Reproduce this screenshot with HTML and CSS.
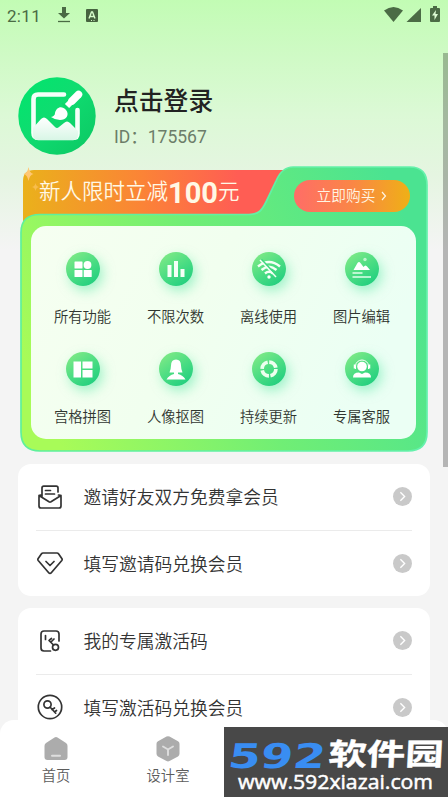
FILE: index.html
```html
<!DOCTYPE html>
<html lang="zh-CN">
<head>
<meta charset="utf-8">
<title>我的</title>
<link rel="stylesheet" href="styles.css">
</head>
<body>
<div class="app">
  <header class="status">
    <span class="time">2:11</span>
    <svg class="st-down" width="14" height="18" viewBox="0 0 14 18"><path d="M5 1h4v6h4L7 12.500 1 7h4z" fill="#4a6b44"/><path d="M1 15.500h12" stroke="#4a6b44" stroke-width="1.300"/></svg>
    <svg class="st-a" width="12" height="13" viewBox="0 0 12 13"><rect width="12" height="13" rx="1" fill="#46633f"/><path d="M3 9.500 5.500 3h1L9 9.500M4 7.500h4" fill="none" stroke="#d5fbc9" stroke-width="1.400"/><path d="M5 11.500h1M7.500 11.500h1" stroke="#d5fbc9"/></svg>
    <span class="spacer"></span>
    <svg width="56" height="18" viewBox="0 0 56 18" fill="#4b6b45"><path d="M0 4.500Q9.500-2.500 19 4.500L9.500 16z"/><path d="M37 2v14H22.500z"/><path d="M49 0h4v2h2q1 0 1 1v12q0 1-1 1h-8q-1 0-1-1V3q0-1 1-1h2z"/><path d="M52 4l-4 5.500h2.500V14l3.500-6h-2.500z" fill="#ddfbd4"/></svg>
  </header>

  <section class="profile">
    <svg class="avatar" width="78" height="78" viewBox="0 0 78 78">
      <defs>
        <linearGradient id="av" x1="0" y1="0" x2="1" y2="1"><stop offset="0" stop-color="#00e66d"/><stop offset=".45" stop-color="#0fdc70"/><stop offset="1" stop-color="#0cc763"/></linearGradient>
        <linearGradient id="hill" x1="0" y1="0" x2="0" y2="1"><stop offset="0" stop-color="#fff"/><stop offset="1" stop-color="#d8f6e6"/></linearGradient>
      </defs>
      <circle cx="39" cy="39" r="38.700" fill="url(#av)"/>
      <path d="M46 17.500H20q-4.500 0-4.500 4.500v34q0 5 5 5H55q4.500 0 4.500-4.500V33" fill="none" stroke="#f5fff9" stroke-width="4.600" stroke-linecap="round"/>
      <path d="M15 51 23 42q3-3 6 0l8 8q2 2 4 0l5-4q3-3 6 0l8 8v4q0 5-5 5H20q-5 0-5-5z" fill="url(#hill)"/>
      <path d="M60.500 17.500 54 24" stroke="#fff" stroke-width="7.500" stroke-linecap="round"/>
      <path d="M54 24 49 29" stroke="#fff" stroke-width="6"/>
      <path d="M33 40q4-1 4-4c1-6 7-8 11-3 4 5 0 10-6 10q-5 0-9-3z" fill="#fff"/>
      <path d="M44 26 53 36" stroke="#0ed56b" stroke-width="1.600"/>
    </svg>
    <div class="who"><h1>点击登录</h1><p>ID：175567</p></div>
  </section>

  <section class="vip">
    <svg class="vip-bg" width="410" height="287" viewBox="0 0 410 287">
      <defs>
        <linearGradient id="orange" x1="0" x2="1"><stop offset="0" stop-color="#eab11b"/><stop offset=".45" stop-color="#fb8436"/><stop offset=".82" stop-color="#ff5d54"/></linearGradient>
        <linearGradient id="green" x1="0" y1=".65" x2="1" y2=".35"><stop offset="0" stop-color="#a8fb58"/><stop offset=".5" stop-color="#70ee75"/><stop offset="1" stop-color="#4be391"/></linearGradient>
        <linearGradient id="edge" x1="0" x2="1"><stop offset="0" stop-color="#5ef09b"/><stop offset="1" stop-color="#65f1ac"/></linearGradient>
        <linearGradient id="panel" x1="0" x2="1" y1="0" y2=".3"><stop offset="0" stop-color="#f6fff1"/><stop offset=".5" stop-color="#f1ffef"/><stop offset="1" stop-color="#ebfff4"/></linearGradient>
      </defs>
      <path d="M3 70V16Q3 5 14 5H265V65z" fill="url(#orange)"/>
      <path d="M1 67.500Q1 49.500 20 49.500H249C259 49.500 262 44 266 36L274 15Q278 2 289 2" fill="none"/>
      <path d="M1 67.500Q1 49.500 20 49.500H229C239 49.500 242 45 246 37L256 16Q262 2 273 2H390Q407 2 407 20V267Q407 286 388 286H20Q1 286 1 267z" fill="url(#green)" stroke="url(#edge)" stroke-width="1.700"/>
      <rect x="11" y="61" width="385" height="213" rx="15" fill="url(#panel)"/>
      <path d="M8.500 2q1 6 5 7-4 1-5 7-1-6-5-7 4-1 5-7z" fill="#ffc775"/>
      <path d="M15.500 18q.6 3.500 3.500 4-2.900.5-3.500 4-.6-3.500-3.500-4 2.900-.5 3.500-4z" fill="#f8bd4d"/>
    </svg>
    <div class="vip-head">
      <div class="promo">新人限时立减<b>100</b>元</div>
      <div class="buy">立即购买<svg width="6" height="10" viewBox="0 0 6 10"><path d="M1 1l3.500 4L1 9" fill="none" stroke="#fff5e3" stroke-width="1.200"/></svg></div>
    </div>
    <div class="features">
      <div class="feature"><div class="disc"><svg viewBox="0 0 34 34" fill="#fff"><rect x="8.500" y="9.500" width="8" height="7" rx=".5"/><circle cx="21.500" cy="13" r="3.900"/><rect x="8.500" y="18" width="8" height="7" rx=".5"/><rect x="17.700" y="18" width="8" height="7" rx=".5"/></svg></div><span>所有功能</span></div>
      <div class="feature"><div class="disc"><svg viewBox="0 0 34 34" fill="#f5fff7"><rect x="8.500" y="13" width="4" height="12"/><rect x="15" y="9" width="4" height="16"/><rect x="21.500" y="17" width="4" height="8"/></svg></div><span>不限次数</span></div>
      <div class="feature"><div class="disc"><svg viewBox="0 0 34 34" fill="none" stroke="#f3fff5" stroke-width="2.400"><path d="M6 14.500Q17 5.500 28 14.500M9.500 18Q17 11.500 24.500 18M13 21.500q4-3.500 8 0"/><circle cx="17" cy="25" r="1.700" fill="#fff" stroke="none"/><path d="M9.500 7.500l15.500 16.500" stroke="#3ed681" stroke-width="1.800"/><path d="M8 8l16 17" stroke-width="1.500"/></svg></div><span>离线使用</span></div>
      <div class="feature"><div class="disc"><svg viewBox="0 0 34 34" fill="#fff"><path d="M8.500 18l4-7q1.500-2 3 0l3 4q2-3 4 0l2.500 3z"/><circle cx="20" cy="7.500" r="1.700" opacity=".6"/><path d="M7.500 21h10M7.500 25h18.500" stroke="#dfffea" stroke-width="1.600"/></svg></div><span>图片编辑</span></div>
      <div class="feature"><div class="disc"><svg viewBox="0 0 34 34" fill="#fff"><rect x="7.500" y="9.500" width="7.500" height="16"/><rect x="16.500" y="9.500" width="10" height="7"/><rect x="16.500" y="18" width="10" height="7.500"/></svg></div><span>宫格拼图</span></div>
      <div class="feature"><div class="disc"><svg viewBox="0 0 34 34" fill="#fff"><path d="M17 7.500q5 0 5 6 0 3 1.500 7H19v1.500q5 1 7.500 5.500h-19q2.500-4.500 7.500-5.500v-1.500h-4.500q1.500-4 1.500-7 0-6 5-6z"/></svg></div><span>人像抠图</span></div>
      <div class="feature"><div class="disc"><svg viewBox="0 0 34 34" fill="none"><circle cx="17" cy="17" r="6.900" stroke="#edffef" stroke-width="3.700" stroke-dasharray="9.300 1.540"/></svg></div><span>持续更新</span></div>
      <div class="feature"><div class="disc"><svg viewBox="0 0 34 34" fill="#fff"><circle cx="17" cy="14.500" r="4.800"/><path d="M10.500 17v-3a6.500 6 0 0 1 13 0v3" fill="none" stroke="#fff" stroke-width="1"/><path d="M9.500 12.500v4M24.500 12.500v4" stroke="#fff" stroke-width="1.500"/><path d="M8 25.500q0-5 6-5l3 1.500 3-1.500q6 0 6 5z"/></svg></div><span>专属客服</span></div>
    </div>
  </section>

  <section class="card">
    <div class="row">
      <svg class="ico" viewBox="0 0 26 26"><path d="M4.500 11H3.500Q2 11 2 12.500V22q0 2 2 2h18q2 0 2-2V12.500Q24 11 22 11h-.5M5 12.500V4q0-1.800 1.800-1.800h12.500Q21 2.200 21 4v4M2 11.500l10 6.300q1 .5 2 0l10-6.300M8.500 6.500h5M8.500 10h9"/></svg>
      <span>邀请好友双方免费拿会员</span><i class="go"><svg viewBox="0 0 18 18"><path d="M7 5l4 4-4 4"/></svg></i>
    </div>
    <div class="row">
      <svg class="ico" viewBox="0 0 26 26"><path d="M6 3h14q1 0 1.500.7l3.300 4.800q.7 1 0 2L14.500 22.500q-1.500 1.800-3 0L1.200 10.500q-.7-1 0-2L4.500 3.700Q5 3 6 3zM9 11.500l4 4 4-4"/></svg>
      <span>填写邀请码兑换会员</span><i class="go"><svg viewBox="0 0 18 18"><path d="M7 5l4 4-4 4"/></svg></i>
    </div>
  </section>

  <section class="card">
    <div class="row">
      <svg class="ico" viewBox="0 0 26 26"><path d="M22 13V6q0-3-3-3H7Q4 3 4 6v14q0 3 3 3h6.500M8.500 7.500v4M12 12.500l4.500 4.500M14 14l3-3M12.500 12l2-1.500"/><circle cx="18.500" cy="19.300" r="3"/></svg>
      <span>我的专属激活码</span><i class="go"><svg viewBox="0 0 18 18"><path d="M7 5l4 4-4 4"/></svg></i>
    </div>
    <div class="row">
      <svg class="ico" viewBox="0 0 26 26"><circle cx="13" cy="13" r="11.700"/><circle cx="10.500" cy="10.500" r="3.600"/><path d="M13.200 13.200l5.500 6M15 15.500l2.500-1.500M17.500 18l2-1.500"/></svg>
      <span>填写激活码兑换会员</span><i class="go"><svg viewBox="0 0 18 18"><path d="M7 5l4 4-4 4"/></svg></i>
    </div>
  </section>
</div>

<div class="scrollbar"></div>

<nav class="tabs">
  <div class="tab"><svg width="24" height="26" viewBox="0 0 24 26"><path d="M10.500 1.500q1.500-.8 3 0L22 7q1.500 1 1.500 3v11q0 3-3 3h-17q-3 0-3-3V10Q.5 8 2 7z" fill="#acacac"/><path d="M8 19.800h8" stroke="#dedede" stroke-width="2" stroke-linecap="round"/></svg><span>首页</span></div>
  <div class="tab"><svg width="24" height="26" viewBox="0 0 24 26"><path d="M10.500.6q1.500-.8 3 0l8.500 4.700q1.500.8 1.500 2.500v10q0 1.800-1.500 2.600l-8.500 4.700q-1.500.8-3 0L2 20.400Q.5 19.600.5 17.800v-10Q.5 6.100 2 5.300z" fill="#acacac"/><path d="M7 10.500l5 3 5-3M12 13.500V19" fill="none" stroke="#dedede" stroke-width="1.900" stroke-linecap="round"/></svg><span>设计室</span></div>
</nav>

<div class="watermark">
  <svg width="224" height="70" viewBox="0 0 224 70">
    <g transform="translate(0 41) skewX(-8)">
      <text class="wm-num" x="3" y="0" textLength="97" lengthAdjust="spacingAndGlyphs">592</text>
    </g>
    <g transform="translate(0 38) skewX(-3)">
      <text class="wm-name" x="104" y="0" textLength="115" lengthAdjust="spacingAndGlyphs">软件园</text>
    </g>
    <text class="wm-url" x="14" y="62" textLength="195" lengthAdjust="spacingAndGlyphs">www.592xiazai.com</text>
  </svg>
</div>
</body>
</html>
```
FILE: styles.css
```css
* { box-sizing: border-box; }

body {
  margin: 0;
  height: 797px;
  overflow: hidden;
  background: #f4f4f4 linear-gradient(#c2fcb4 0, #cffac5 55px, #dcf9d6 115px, #e5f5e1 175px, #f4f4f4 250px) no-repeat;
  font-family: Roboto, "Noto Sans CJK SC", sans-serif;
  color: #333;
}

.app {
  height: 797px;
  overflow: hidden;
}

.status {
  display: flex;
  height: 30px;
  padding: 6px 8px 0 7px;
}

.time {
  width: 50px;
  font-size: 17px;
  line-height: 20px;
  letter-spacing: .3px;
  color: #4a6b44;
}

.st-a { margin: 3px 0 0 15px; }
.spacer { flex: 1; }

.profile {
  display: flex;
  height: 135px;
  padding: 47px 0 0 18px;
}

.who { margin: 7px 0 0 18px; }

.who h1 {
  margin: 0;
  font-size: 24.800px;
  font-weight: 500;
  line-height: 36px;
  color: #222;
}

.who p {
  margin: 5px 0 0;
  font-size: 17.500px;
  line-height: 24px;
  color: #6c7d69;
}

.vip {
  position: relative;
  width: 410px;
  height: 287px;
  margin-left: 20px;
}

.vip-bg {
  position: absolute;
  inset: 0;
}

.vip-head {
  position: relative;
  display: flex;
  height: 77px;
}

.promo {
  display: flex;
  width: 274px;
  padding: 7px 0 0 19px;
  font-size: 21.500px;
  font-weight: 350;
  line-height: 39px;
  color: #fff8e5;
  white-space: nowrap;
}

.promo b {
  font-size: 29px;
  line-height: 42px;
  font-weight: 700;
}

.buy {
  display: flex;
  align-items: center;
  justify-content: center;
  gap: 6px;
  width: 116px;
  height: 32px;
  margin-top: 15px;
  border-radius: 16px;
  background: linear-gradient(90deg, #ff6d67, #fa8646 50%, #efb016);
  color: #fff5e3;
  font-size: 14.700px;
  font-weight: 350;
  line-height: 30px;
}

.features {
  position: relative;
  display: grid;
  grid-template-columns: repeat(4, 93px);
  grid-auto-rows: 100px;
  padding-left: 16px;
}

.feature {
  display: flex;
  flex-direction: column;
  align-items: center;
  padding-top: 10px;
}

.disc {
  width: 34px;
  height: 34px;
  border-radius: 50%;
  background: linear-gradient(145deg, #8aec87, #4bdd83 50%, #16cb7e);
  box-shadow: 3px 5px 12px #5fe8a78c;
}

.disc svg {
  display: block;
  width: 34px;
  height: 34px;
}

.feature span {
  margin-top: 20px;
  font-size: 14.300px;
  font-weight: 350;
  line-height: 23px;
  color: #303630;
}

.card {
  width: 412px;
  margin: 12px 0 0 18px;
  padding: 0 18px;
  border-radius: 13px;
  background: #fff;
}

.row {
  display: flex;
  align-items: center;
  height: 66px;
  padding-bottom: 1px;
  font-size: 17.750px;
  font-weight: 350;
}

.row > span { margin-top: -1px; }

.row + .row { border-top: 1px solid #ebebeb; }

.ico {
  width: 26px;
  height: 26px;
  margin: 0 20.500px 0 1px;
  fill: none;
  stroke: #333;
  stroke-width: 1.700;
  stroke-linecap: round;
  stroke-linejoin: round;
}

.go {
  width: 19px;
  height: 19px;
  margin-left: auto;
  border-radius: 50%;
  background: #c9c9c9;
}

.go svg {
  display: block;
  width: 19px;
  height: 19px;
  fill: none;
  stroke: #fff;
  stroke-width: 1.300;
}

.scrollbar {
  position: absolute;
  top: 53px;
  right: 0;
  width: 5px;
  height: 414px;
  background: #00000042;
}

.tabs {
  position: absolute;
  left: 0;
  bottom: 0;
  display: flex;
  width: 448px;
  height: 77px;
  border-radius: 14px 14px 0 0;
  background: #fff;
}

.tab {
  display: flex;
  flex-direction: column;
  align-items: center;
  width: 112px;
  padding-top: 16px;
  font-size: 14.300px;
  font-weight: 350;
  line-height: 22px;
  color: #5c5c5c;
}

.tab span { margin-top: 3px; }

.watermark {
  position: absolute;
  right: 0;
  bottom: 0;
  width: 224px;
  height: 70px;
  background: #484848;
}

.wm-num {
  font-family: "DejaVu Sans", sans-serif;
  font-weight: 700;
  font-size: 34px;
  fill: #398df2;
}

.wm-name {
  font-family: "Noto Sans CJK SC", sans-serif;
  font-weight: 700;
  font-size: 30px;
  fill: #fff;
  stroke: #fff;
  stroke-width: .4;
}

.wm-url {
  font-family: "Open Sans", "Noto Sans", sans-serif;
  font-weight: 400;
  font-size: 20px;
  fill: #fff;
  stroke: #fff;
  stroke-width: .5;
}
```
